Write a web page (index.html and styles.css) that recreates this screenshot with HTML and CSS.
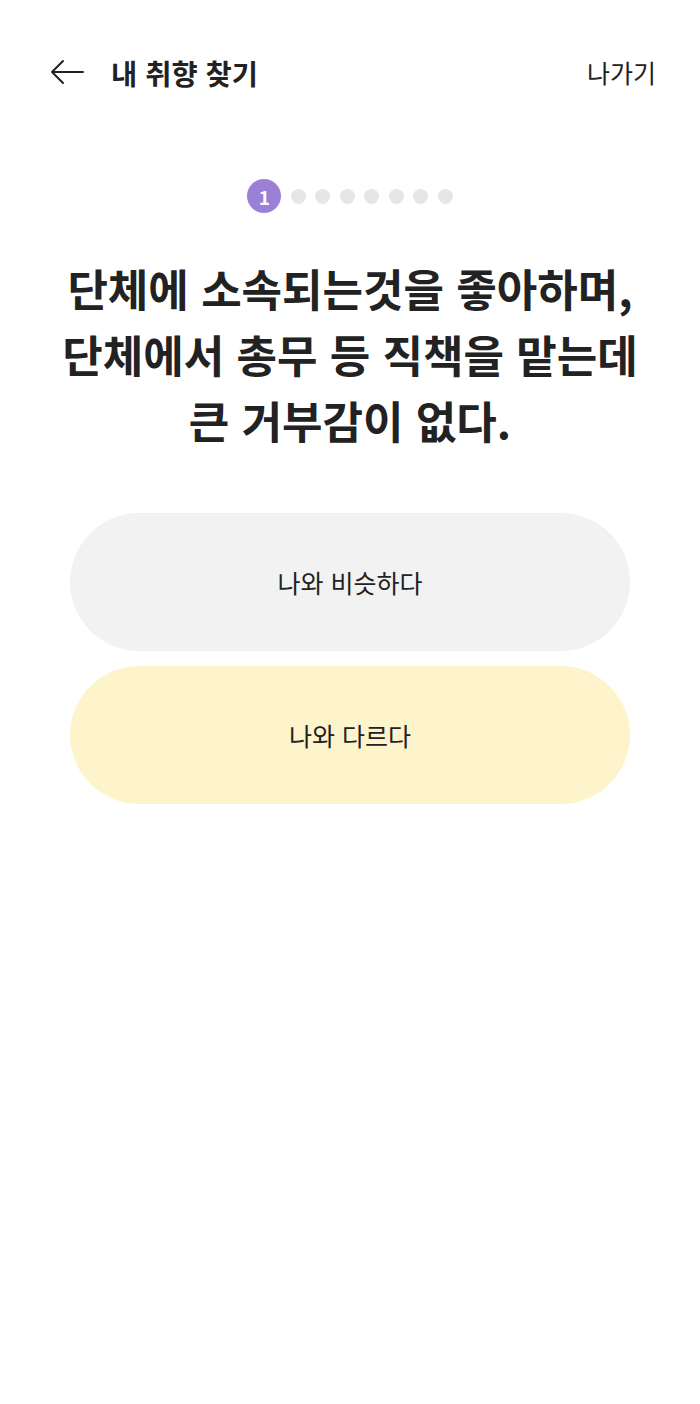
FILE: index.html
```html
<!DOCTYPE html>
<html lang="ko">
<head>
  <meta charset="UTF-8">
  <title>내 취향 찾기</title>
  <link rel="stylesheet" href="styles.css">
</head>
<body>
  <div class="top-bar">
    <div class="top-left">
      <svg class="back" width="34" height="26" viewBox="0 0 34 26">
        <path d="M33 13 H2 M13 2 L2 13 L13 24" fill="none" stroke="#222" stroke-width="2" stroke-linecap="round" stroke-linejoin="round"/>
      </svg>
      <h1>내 취향 찾기</h1>
    </div>
    <span class="exit">나가기</span>
  </div>

  <!-- 진행 단계 -->
  <div class="steps">
    <span class="step-now">1</span>
    <span class="dot"></span>
    <span class="dot"></span>
    <span class="dot"></span>
    <span class="dot"></span>
    <span class="dot"></span>
    <span class="dot"></span>
    <span class="dot"></span>
  </div>

  <p class="question">단체에 소속되는것을 좋아하며,<br>단체에서 총무 등 직책을 맡는데<br>큰 거부감이 없다.</p>

  <div class="answers">
    <button class="answer same">나와 비슷하다</button>
    <button class="answer diff">나와 다르다</button>
  </div>
</body>
</html>
```

FILE: styles.css
```css
body {
  font-family: "Noto Sans CJK KR", "Noto Sans", sans-serif;
  margin: 0;
  padding: 0;
  background: #ffffff;
  color: #222222;
}

.top-bar {
  display: flex;
  justify-content: space-between;
  align-items: center;
  height: 56px;
  margin-top: 44px;
  padding: 0 44px 0 50px;
}

.top-left {
  display: flex;
  align-items: center;
}

.back {
  display: block;
}

.top-bar h1 {
  margin: 0 0 0 27px;
  font-size: 28.5px;
  font-weight: 700;
}

.exit {
  font-size: 25px;
  color: #222;
}

.steps {
  display: flex;
  justify-content: center;
  align-items: center;
  gap: 9.5px;
  margin-top: 79px;
}

.step-now {
  width: 34px;
  height: 34px;
  border-radius: 50%;
  background: #9a80d6;
  color: #ffffff;
  font-size: 19px;
  font-weight: 700;
  display: flex;
  justify-content: center;
  align-items: center;
}

.dot {
  width: 15px;
  height: 15px;
  border-radius: 50%;
  background: #e6e6e6;
}

.question {
  margin: 42px 0 0;
  text-align: center;
  font-size: 44px;
  font-weight: 700;
  line-height: 66px;
}

.answers {
  display: flex;
  flex-direction: column;
  gap: 15px;
  margin: 60px 70px 0;
}

.answer {
  height: 138px;
  border: none;
  border-radius: 69px;
  font-family: inherit;
  font-size: 25px;
  color: #222;
  cursor: pointer;
}

.answer.same {
  background: #f2f2f2;
}

.answer.diff {
  background: #fdf4cc;
}
```
